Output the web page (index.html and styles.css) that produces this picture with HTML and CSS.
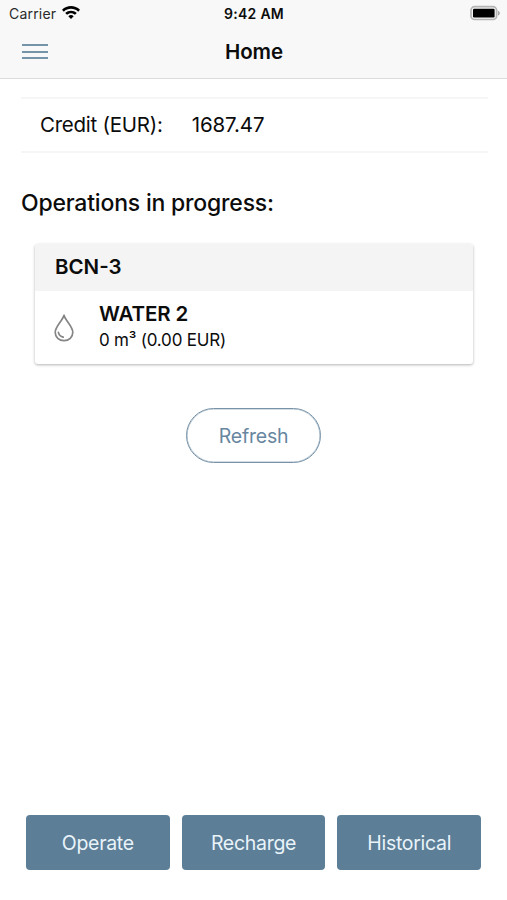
FILE: index.html
```html
<!DOCTYPE html>
<html lang="en">
<head>
  <meta charset="UTF-8" />
  <meta name="viewport" content="width=device-width, initial-scale=1" />
  <title>Home</title>
  <link rel="stylesheet" href="styles.css">
</head>
<body>
  <header class="header">
    <div class="status-bar">
      <div class="status-left">
        <span class="carrier">Carrier</span>
        <svg class="wifi" viewBox="0 0 18 14" width="20" height="15">
          <path d="M0.6 4.4 C5.3 -0.3 12.7 -0.3 17.4 4.4 L15.7 6.2 C12 2.6 6 2.6 2.3 6.2 Z" />
          <path d="M3.6 7.5 C6.7 4.5 11.3 4.5 14.4 7.5 L12.7 9.2 C10.6 7.2 7.4 7.2 5.3 9.2 Z" />
          <path d="M6.5 10.4 C8 9.1 10 9.1 11.5 10.4 L9 13 Z" />
        </svg>
      </div>
      <span class="clock">9:42 AM</span>
      <svg class="battery" viewBox="0 0 32 16" width="32" height="16">
        <rect x="2" y="1.7" width="25.6" height="12.8" rx="3.6" fill="#f4f4f4" stroke="#b4b4b4" stroke-width="1.7" />
        <rect x="4" y="3.8" width="21.6" height="8.6" rx="1.2" />
        <path d="M29 5.7 C31.4 6.5 31.4 9.7 29 10.5 Z" fill="#a6a6a6" />
      </svg>
    </div>
    <div class="toolbar">
      <button class="menu-button" aria-label="Menu">
        <span></span>
        <span></span>
        <span></span>
      </button>
      <h1 class="title">Home</h1>
    </div>
  </header>

  <main class="content">
    <div class="credit">
      <span class="credit-label">Credit (EUR):</span>
      <span class="credit-value">1687.47</span>
    </div>

    <h2 class="section-title">Operations in progress:</h2>

    <div class="card">
      <div class="card-header">BCN-3</div>
      <div class="card-item">
        <svg class="drop" viewBox="0 0 22 30" width="22" height="30">
          <path d="M11 2.2 C9.6 7.6 2.2 13.4 2.2 19.2 C2.2 24.2 6 27.6 11 27.6 C16 27.6 19.8 24.2 19.8 19.2 C19.8 13.4 12.4 7.6 11 2.2 Z" />
          <path d="M5.4 19.4 C5.9 21.8 7.5 23.6 10.2 24.2" />
        </svg>
        <div class="card-text">
          <h3 class="op-name">WATER 2</h3>
          <p class="op-amount">0 m³ (0.00 EUR)</p>
        </div>
      </div>
    </div>

    <button class="refresh">Refresh</button>
  </main>

  <footer class="footer">
    <button class="action operate">Operate</button>
    <button class="action recharge">Recharge</button>
    <button class="action historical">Historical</button>
  </footer>
</body>
</html>
```
FILE: styles.css
```css
:root {
  --primary: #5c7e96;
  --bar: #f8f8f8;
  --line: #f6f6f6;
}

* {
  margin: 0;
  padding: 0;
  box-sizing: border-box;
}

body {
  display: flex;
  flex-direction: column;
  height: 100vh;
  overflow: hidden;
  background: #fff;
  color: #0c0c0c;
  font-family: Inter, "Liberation Sans", sans-serif;
}

button {
  border: none;
  background: none;
  font-family: inherit;
  cursor: pointer;
}

.header {
  height: 79px;
  background: var(--bar);
  border-bottom: 1px solid #dcdcdc;
}

/* status bar */
.status-bar {
  display: grid;
  grid-template-columns: 1fr auto 1fr;
  align-items: center;
  height: 27px;
  padding: 0 6px 0 9px;
}

.status-left {
  display: flex;
  align-items: center;
  gap: 5px;
}

.wifi {
  margin-top: -2px;
}

.carrier {
  color: #2a2a2a;
  font-size: 14px;
  letter-spacing: 0.2px;
}

.clock {
  margin-right: 2px;
  font-size: 14px;
  font-weight: 600;
  letter-spacing: 0.3px;
}

.battery {
  justify-self: end;
  margin-top: -1px;
}

.toolbar {
  display: grid;
  grid-template-columns: 1fr auto 1fr;
  align-items: center;
  height: 50px;
  padding: 0 22px;
}

.menu-button {
  display: flex;
  flex-direction: column;
  gap: 4.5px;
  width: 26px;
  margin-top: -1px;
}

.menu-button span {
  height: 2px;
  background: #7593a9;
}

.title {
  padding: 0 0 2px 1px;
  font-size: 20.5px;
  font-weight: 600;
  letter-spacing: -0.1px;
}

.content {
  flex: 1;
  display: flex;
  flex-direction: column;
  padding: 18px 19px 0 21px;
}

.credit {
  display: flex;
  align-items: center;
  gap: 29px;
  height: 56px;
  padding: 0 0 2px 19px;
  border-top: 2px solid var(--line);
  border-bottom: 2px solid var(--line);
  font-size: 20.5px;
}

.credit-label {
  letter-spacing: -0.25px;
}

.credit-value {
  letter-spacing: -0.1px;
}

.section-title {
  margin-top: 35px;
  font-size: 23px;
  font-weight: 500;
  letter-spacing: -0.2px;
  line-height: 30px;
}

/* operations card */
.card {
  margin: 26px 15px 0 14px;
  border-radius: 3px;
  overflow: hidden;
  box-shadow: 0 1px 3px rgba(0, 0, 0, 0.3);
}

.card-header {
  height: 47px;
  padding-left: 20px;
  background: #f4f4f4;
  font-size: 20.5px;
  font-weight: 600;
  line-height: 45px;
}

.card-item {
  display: flex;
  align-items: center;
  gap: 24px;
  height: 73px;
  padding-left: 18px;
}

.card-text {
  margin-top: -2px;
}

.op-name {
  font-size: 20.5px;
  font-weight: 600;
  letter-spacing: -0.1px;
  line-height: 26px;
}

.op-amount {
  font-size: 17px;
  letter-spacing: -0.2px;
  line-height: 26px;
}

.drop {
  fill: none;
  stroke: #858585;
  stroke-width: 1.7;
  stroke-linecap: round;
  stroke-linejoin: round;
}

.refresh {
  align-self: center;
  width: 135px;
  height: 55px;
  margin: 44px 2px 0 0;
  border: 1px solid #7893a8;
  border-radius: 28px;
  box-shadow: inset 0 0 0 0.6px #a9bbc8;
  color: #6786a0;
  font-size: 19.5px;
  letter-spacing: -0.2px;
}

/* bottom actions */
.footer {
  display: flex;
  gap: 12px;
  padding: 0 26px 30px;
}

.action {
  flex: 1;
  height: 55px;
  border-radius: 4px;
  background: var(--primary);
  color: #e9f3fa;
  font-size: 19.5px;
  letter-spacing: -0.3px;
}
```
